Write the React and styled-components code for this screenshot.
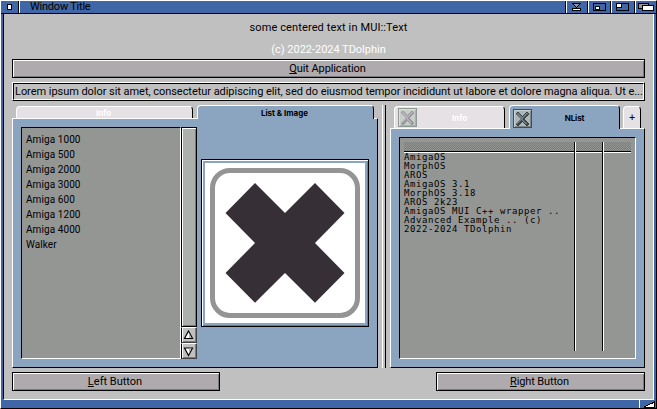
import React from 'react';
import styled, { createGlobalStyle, css } from 'styled-components';

const color = {
  title: '#3f66a6',
  face: '#c0c0c0',
  button: '#aeaaae',
  page: '#8ba5c0',
  list: '#949694',
  tab: '#e5e1e5',
  knob: '#acb0ac',
  shade: '#7b797b',
};

const Global = createGlobalStyle`
  * { box-sizing: border-box; }
  body { margin: 0; background: #fff; }
`;

const raised = css`
  border: 1px solid;
  border-color: #fff #000 #000 #fff;
`;

const sunken = css`
  border: 1px solid;
  border-color: #000 #fff #fff #000;
`;

const Window = styled.div`
  ${raised}
  width: 657px;
  height: 409px;
  display: flex;
  flex-direction: column;
  background: ${color.title};
  font: 11px/13px Roboto, "Liberation Sans", sans-serif;
  color: #000;
  overflow: hidden;
  white-space: nowrap;
`;

const TitleBar = styled.div`
  height: 13px;
  flex: none;
  display: flex;
  border-bottom: 1px solid #000;
`;

const CloseGadget = styled.div`
  width: 18px;
  border-right: 1px solid #000;
  display: flex;
`;

const Title = styled.div`
  flex: 1;
  border-left: 1px solid #fff;
  padding-left: 10px;
  line-height: 12px;
  letter-spacing: -0.22px;
`;

const Gadget = styled.div`
  width: ${(p) => p.$w}px;
  border-left: 1px solid #000;
  box-shadow: inset 1px 0 #fff;
  display: flex;
`;

const Body = styled.div`
  height: 386px;
  flex: none;
  margin: 0 2px;
  border: solid;
  border-width: 0 1px 1px 1px;
  border-color: #fff #fff #fff #000;
  background: ${color.face};
  padding: 2px 8px 8px;
  display: flex;
  flex-direction: column;
`;

const Line = styled.div`
  height: ${(p) => p.$h}px;
  line-height: 24px;
  text-align: center;
  color: ${(p) => p.$c || '#000'};
  letter-spacing: ${(p) => p.$ls}px;
`;

const Button = styled.div`
  width: ${(p) => (p.$w ? p.$w + 'px' : 'auto')};
  height: 19px;
  flex: none;
  border: 1px solid #000;
  background: ${color.button};
  box-shadow: inset 1px 1px #fff, inset -1px -1px ${color.shade};
  text-align: center;
  line-height: 17px;
  padding-right: 2px;
  letter-spacing: ${(p) => p.$ls || 0}px;
`;

const Key = styled.span`
  text-decoration: underline;
  text-underline-offset: 1px;
  text-decoration-thickness: 1px;
  text-decoration-skip-ink: none;
`;

const Field = styled.div`
  ${raised}
  height: 19px;
  flex: none;
  margin-top: 4px;
`;

const FieldInner = styled.div`
  ${sunken}
  height: 17px;
  line-height: 15px;
  padding-left: 1px;
  letter-spacing: -0.045px;
`;

const Main = styled.div`
  height: 263px;
  margin: 4px 0;
  display: flex;
  gap: 4px;
`;

const Group = styled.div`
  width: ${(p) => p.$w}px;
  display: flex;
  flex-direction: column;
`;

const Splitter = styled.div`
  width: 4px;
  border: solid;
  border-width: 0 1px;
  border-color: #fff #000 #000 #fff;
`;

const Tabs = styled.div`
  height: ${(p) => p.$h}px;
  flex: none;
  display: flex;
  align-items: flex-end;
  padding-left: 4px;
`;

const Tab = styled.div`
  width: ${(p) => p.$w}px;
  height: ${(p) => (p.$active ? 'calc(100% + 1px)' : 'calc(100% - 1px)')};
  margin-right: ${(p) => p.$gap ?? 4}px;
  margin-bottom: ${(p) => (p.$active ? -1 : 0)}px;
  padding-top: ${(p) => (p.$active ? 1 : 0)}px;
  position: relative;
  z-index: ${(p) => (p.$active ? 1 : 0)};
  display: flex;
  align-items: center;
  border: solid;
  border-width: 1px 1px 0;
  border-color: #fff #000 #000 #fff;
  border-radius: 4px 4px 0 0;
  background: ${(p) => (p.$active ? color.page : color.tab)};
  color: ${(p) => (p.$active || p.$dark ? '#000' : '#fff')};
  font: bold 8px/10px Inter, "Liberation Sans", sans-serif;
`;

const TabLabel = styled.span`
  flex: 1;
  text-align: center;
  padding-right: 2px;
  letter-spacing: ${(p) => p.$ls || 0}px;
`;

const PlusLabel = styled(TabLabel)`
  padding: 1px 0 0;
  font: bold 8px/10px "DejaVu Sans", sans-serif;
`;

const Page = styled.div`
  ${raised}
  flex: 1;
  min-height: 0;
  padding: 8px;
  background: ${color.page};
  display: flex;
`;

const List = styled.div`
  ${sunken}
  width: 160px;
  padding: 4px;
  background: ${color.list};
  font-size: 10px;
  line-height: 15px;
  letter-spacing: 0.08px;
`;

const Scrollbar = styled.div`
  width: 16px;
  margin-right: 4px;
  display: flex;
  flex-direction: column;
`;

const Knob = styled.div`
  flex: 1;
  border: 1px solid #000;
  background: ${color.knob};
  box-shadow: inset 1px 1px #fff, inset -1px -1px ${color.shade};
`;

const ArrowButton = styled.div`
  height: 16px;
  border: 1px solid;
  border-color: #fff #444 #444 #000;
  box-shadow: inset 1px 0 #fff, inset -1px -1px ${color.shade};
  background: ${color.face};
  display: flex;
`;

const ImageFrame = styled.div`
  width: 168px;
  height: 168px;
  align-self: center;
  border: 1px solid #000;
  box-shadow: inset 1px 1px #fff, inset -1px -1px ${color.shade};
  padding: 3px;
  display: flex;
`;

const NList = styled.div`
  ${sunken}
  flex: 1;
  padding: 4px 4px 7px;
  background: ${color.list};
  display: grid;
  grid-template-columns: 170px 28px 1fr;
`;

const Column = styled.div`
  display: flex;
  flex-direction: column;
  border-left: ${(p) => (p.$line ? '1px solid #000' : '0')};
`;

const ColumnInner = styled.div`
  flex: 1;
  border-left: ${(p) => (p.$line ? '1px solid #fff' : '0')};
  font: 9px/9px "DejaVu Sans Mono", monospace;
  letter-spacing: 0.58px;
  white-space: pre;
`;

const ColumnHead = styled.div`
  height: 11px;
  border-bottom: 1px solid #fff;
  box-shadow: inset 0 -1px #000;
  background: repeating-conic-gradient(#7b7d7b 0 25%, ${color.list} 0 50%) 0 0 / 2px 2px;
`;

const Buttons = styled.div`
  display: flex;
  justify-content: space-between;
`;

const Footer = styled.div`
  flex: 1;
  display: flex;
  justify-content: flex-end;
`;

const SizeGadget = styled.div`
  width: 17px;
  border-left: 1px solid #fff;
  display: flex;
`;

const Svg = styled.svg`
  display: block;
  flex: none;
  shape-rendering: ${(p) => (p.$smooth ? 'auto' : 'crispEdges')};
`;

const CloseFrame = styled.span`
  width: 19px;
  height: 19px;
  margin-left: 3px;
  border: 1px solid ${(p) => (p.$faded ? '#8f9a92' : '#42504c')};
  box-shadow: inset 1px 1px ${(p) => (p.$faded ? '#d9e0da' : '#c9d0d0')},
    inset -1px -1px ${(p) => (p.$faded ? '#a7b0a9' : '#7b8584')};
  background: ${(p) => (p.$faded ? '#c5cec7' : '#b0b4bb')};
  flex: none;
`;

function CloseIcon({ faded }) {
  return (
    <CloseFrame $faded={faded}>
      <Svg width="17" height="17" viewBox="0 0 17 17">
        <path
          d="M2 3h1v-1h2v1h1v1h1v1h1v1h1v-1h1v-1h1v-1h1v-1h2v1h1v2h-1v1h-1v1h-1v1h-1v2h1v1h1v1h1v1h1v2h-1v1h-2v-1h-1v-1h-1v-1h-1v-1h-1v1h-1v1h-1v1h-1v1h-2v-1h-1v-2h1v-1h1v-1h1v-1h1v-2h-1v-1h-1v-1h-1v-1h-1z"
          fill={faded ? '#9c979e' : '#39474a'}
        />
        <path
          d="M3 3h2v1h1v1h1v1h1v1h1v-1h1v-1h1v-1h1v-1h2v1h-1v1h-1v1h-1v1h-1v1h-1v2h1v1h1v1h1v1h1v1h-2v-1h-1v-1h-1v-1h-1v-1h-1v1h-1v1h-1v1h-1v1h-2v-1h1v-1h1v-1h1v-1h1v-2h-1v-1h-1v-1h-1v-1h-1z"
          fill={faded ? '#b5afb8' : '#6d7b7e'}
        />
      </Svg>
    </CloseFrame>
  );
}

const machines = ['Amiga 1000', 'Amiga 500', 'Amiga 2000', 'Amiga 3000', 'Amiga 600', 'Amiga 1200', 'Amiga 4000', 'Walker'];

const systems = [
  'AmigaOS', 'MorphOS', 'AROS', 'AmigaOS 3.1', 'MorphOS 3.18', 'AROS 2k23',
  'AmigaOS MUI C++ wrapper ..', 'Advanced Example .. (c)', '2022-2024 TDolphin',
];

export default function App() {
  return (
    <>
      <Global />
      <Window>
        <TitleBar>
          <CloseGadget>
            <Svg width="17" height="12">
              <path fill="#000" d="M6 3h5v6h-5z" />
              <path fill="#fff" d="M7 4h3v4h-3z" />
            </Svg>
          </CloseGadget>
          <Title>Window Title</Title>
          <Gadget $w={22}>
            <Svg width="20" height="12">
              <path fill="#000" d="M6 2h9v1h-1v1h-1v1h-1v1h-1v1h4v3h-9v-3h4v-1h-1v-1h-1v-1h-1v-1h-1z" />
              <path fill="#949694" d="M8 3h5v1h-1v1h-1v1h-1v-1h-1v-1h-1z" />
              <path fill="#fff" d="M7 8h7v1h-7z" />
            </Svg>
          </Gadget>
          <Gadget $w={23}>
            <Svg width="21" height="12">
              <path fill="none" stroke="#000" d="M5.5 2.5h12v7h-12z" />
              <path fill="#000" d="M7 5h5v4h-5z" />
              <path fill="#fff" d="M8 6h3v2h-3z" />
            </Svg>
          </Gadget>
          <Gadget $w={24}>
            <Svg width="22" height="12">
              <path fill="none" stroke="#000" d="M5.5 2.5h12v7h-12z" />
              <path fill="#000" d="M6 3h5v4h-5z" />
              <path fill="#fff" d="M6 3h4v3h-4z" />
            </Svg>
          </Gadget>
          <Gadget $w={22}>
            <Svg width="20" height="12">
              <path fill="#949694" stroke="#000" d="M3.5 2.5h10v5h-10z" />
              <path fill="#fff" stroke="#000" d="M7.5 4.5h11v5h-11z" />
            </Svg>
          </Gadget>
        </TitleBar>

        <Body>
          <Line $h={22} $ls={0.12}>some centered text in MUI::Text</Line>
          <Line $h={21} $ls={0}>
            <Line as="span" $c="#fff" $ls={-0.02}>(c) 2022-2024 TDolphin</Line>
          </Line>
          <Button $ls={-0.1}><Key>Q</Key>uit Application</Button>
          <Field>
            <FieldInner>
              Lorem ipsum dolor sit amet, consectetur adipiscing elit, sed do eiusmod tempor incididunt ut labore et dolore magna aliqua. Ut e...
            </FieldInner>
          </Field>

          <Main>
            <Group $w={366}>
              <Tabs $h={13}>
                <Tab $w={177}><TabLabel>Info</TabLabel></Tab>
                <Tab $w={177} $active><TabLabel $ls={-0.02}>List &amp; Image</TabLabel></Tab>
              </Tabs>
              <Page>
                <List>
                  {machines.map((m) => <div key={m}>{m}</div>)}
                </List>
                <Scrollbar>
                  <Knob />
                  <ArrowButton>
                    <Svg width="14" height="14" $smooth>
                      <path d="M6.5 3L10.5 10.5h-8z" fill="#fff" stroke="#000" strokeWidth="1.2" />
                      <path d="M7 5L9.5 10H7z" fill="#b5b5b5" />
                    </Svg>
                  </ArrowButton>
                  <ArrowButton>
                    <Svg width="14" height="14" $smooth>
                      <path d="M6.5 11.5L10.5 4h-8z" fill="#fff" stroke="#000" strokeWidth="1.2" />
                      <path d="M7 9.5L9.5 4.6H7z" fill="#b5b5b5" />
                    </Svg>
                  </ArrowButton>
                </Scrollbar>
                <ImageFrame>
                  <Svg width="160" height="160" $smooth>
                    <path fill="#fff" d="M0 0h160v160H0z" />
                    <rect x="7.5" y="7.5" width="145" height="145" rx="17.5" fill="none" stroke="#949494" strokeWidth="5" />
                    <path fill="#362f36" d="M50 20l30 30 30-30 29.5 30L110 80l29.5 30-29.5 29.8-30-29.8-30 29.8L20.5 110 50 80 20.5 50z" />
                  </Svg>
                </ImageFrame>
              </Page>
            </Group>

            <Splitter />

            <Group $w={255}>
              <Tabs $h={23}>
                <Tab $w={111}><CloseIcon faded /><TabLabel>Info</TabLabel></Tab>
                <Tab $w={111} $gap={3} $active><CloseIcon /><TabLabel $ls={-0.1}>NList</TabLabel></Tab>
                <Tab $w={18} $gap={0} $dark><PlusLabel>+</PlusLabel></Tab>
              </Tabs>
              <Page>
                <NList>
                  <Column>
                    <ColumnInner>
                      <ColumnHead />
                      {systems.map((s) => <div key={s}>{s}</div>)}
                    </ColumnInner>
                  </Column>
                  <Column $line><ColumnInner $line><ColumnHead /></ColumnInner></Column>
                  <Column $line><ColumnInner $line><ColumnHead /></ColumnInner></Column>
                </NList>
              </Page>
            </Group>
          </Main>

          <Buttons>
            <Button $w={208}><Key>L</Key>eft Button</Button>
            <Button $w={209} $ls={-0.12}><Key>R</Key>ight Button</Button>
          </Buttons>
        </Body>

        <Footer>
          <SizeGadget>
            <Svg width="16" height="8">
              <path fill="#000" d="M14 1h1v7h-11v-2h2v-1h2v-1h2v-1h2v-1h2z" />
              <path fill="#fff" d="M13 3h1v4h-8v-1h2v-1h2v-1h3z" />
            </Svg>
          </SizeGadget>
        </Footer>
      </Window>
    </>
  );
}
